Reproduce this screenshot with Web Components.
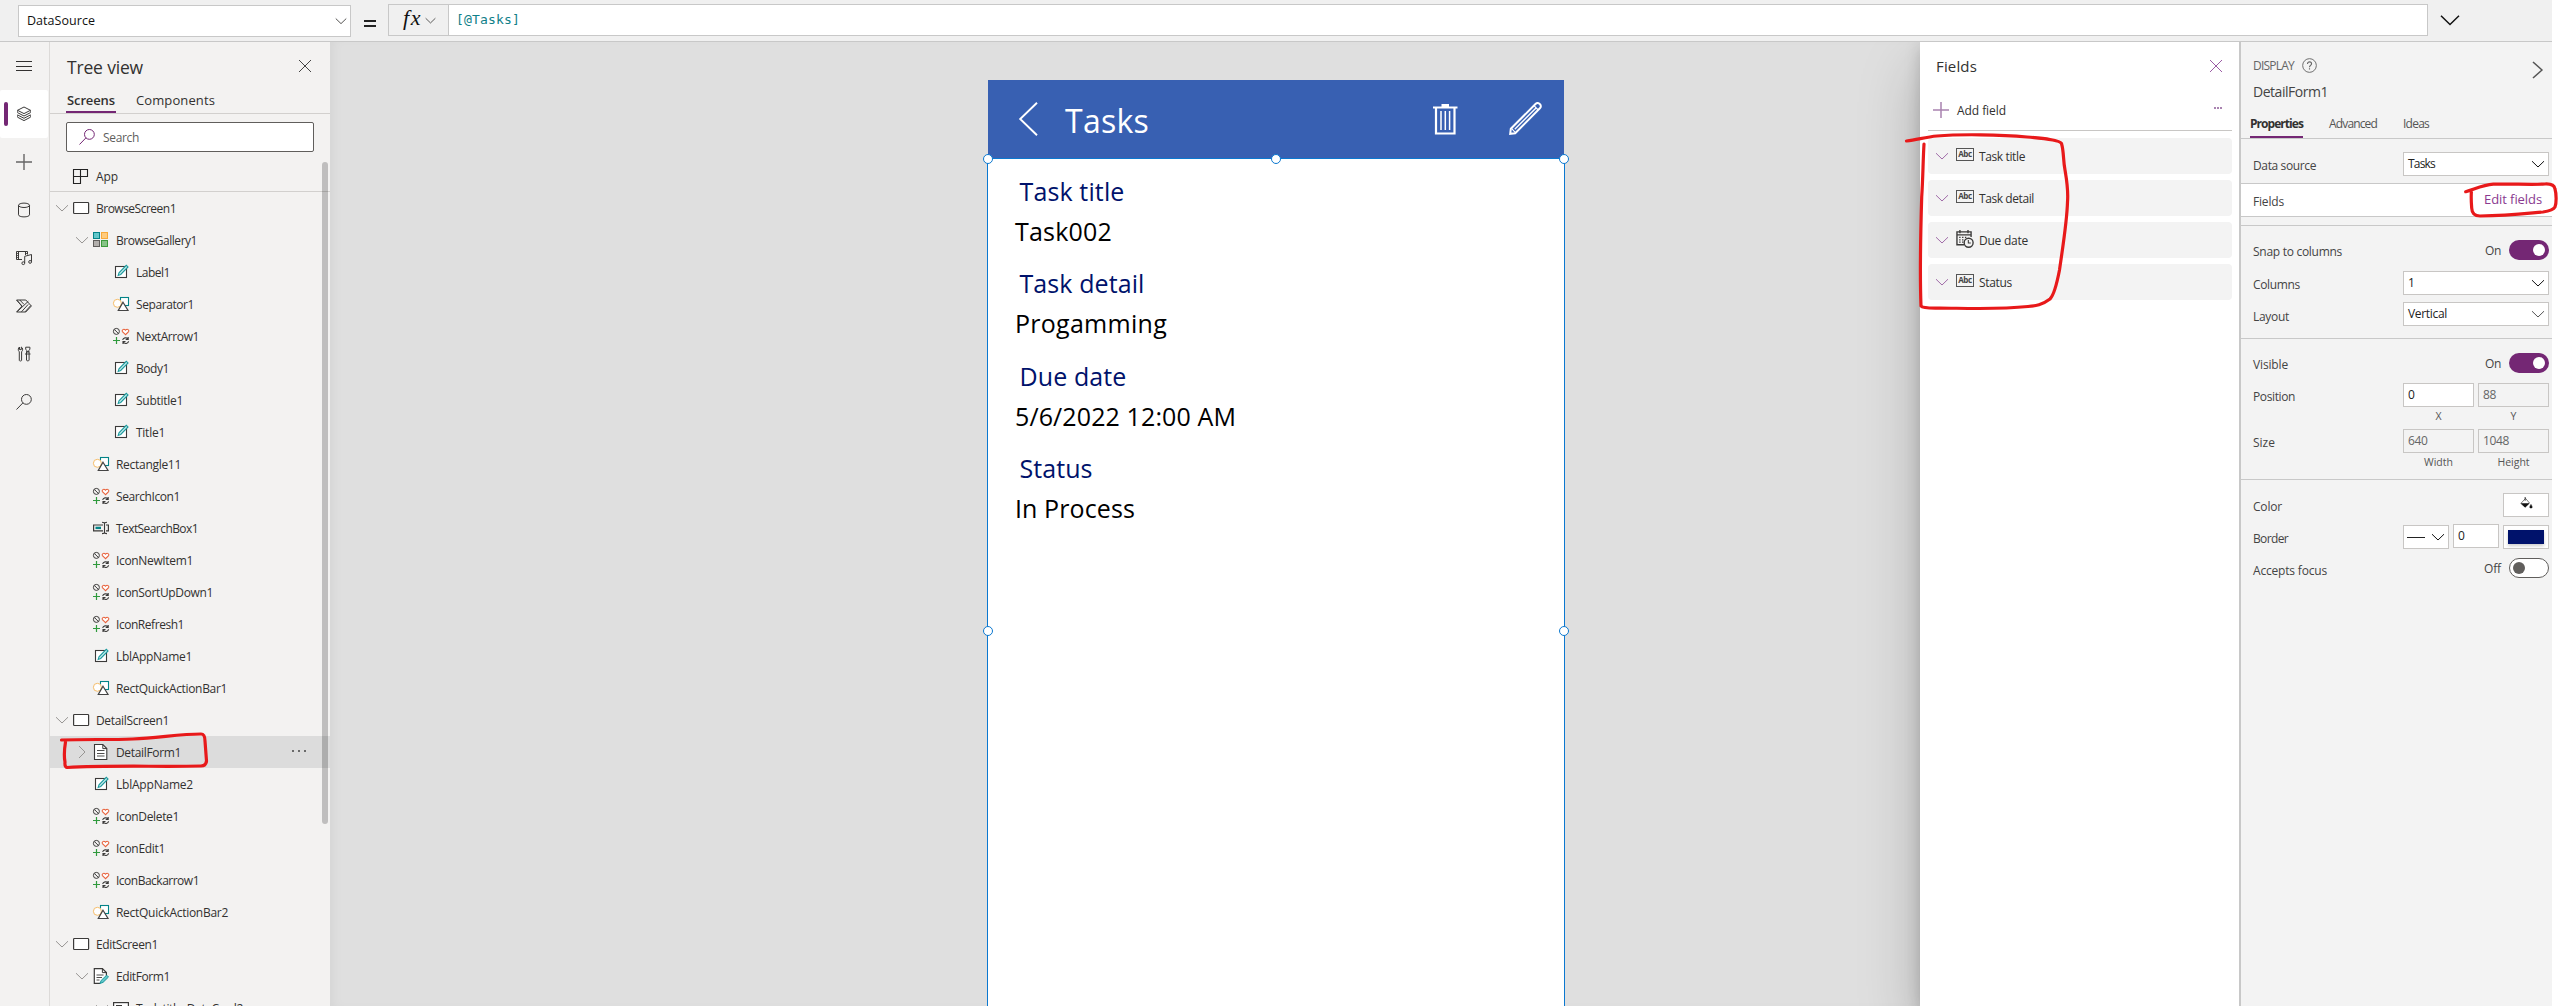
<!DOCTYPE html>
<html lang="en">
<head>
<meta charset="utf-8">
<title>Power Apps Studio</title>
<style>
html,body{margin:0;height:100%;overflow:hidden;background:#fff}
body{font:12px/16px "Open Sans","Noto Sans",sans-serif;color:#323130}
</style>
</head>
<body>
<pa-studio></pa-studio>
<script>
const ICONS = {
  menu:'<path d="M0 3.5h16M0 8.5h16M0 12.5h16" stroke="#323130"/>',
  layers:'<path d="M8 1l6.5 3.3L8 7.6 1.500 4.300z"/><path d="M1.500 6.600L8 10l6.500-3.400M1.500 8.900L8 12.300l6.500-3.400M1.500 11.200L8 14.600l6.500-3.400"/><path d="M1.500 4.300v2.300M14.500 4.300v2.300M1.500 8.900v2.300M14.500 8.900v2.300" stroke-width=".7"/>',
  plus:'<path d="M8 0v16M0 8h16" stroke="#666" stroke-width="1.4"/>',
  pplus:'<path d="M8 0v16M0 8h16" stroke="#a983b0" stroke-width="1.500"/>',
  data:'<ellipse cx="8" cy="3.300" rx="5.500" ry="2.200"/><path d="M2.500 3.300v9.500c0 1.200 2.500 2.100 5.500 2.100s5.500-.9 5.500-2.100V3.300"/>',
  media:'<path d="M6 9.500H.5v-8h11v3M2.500 2v7.500M9.500 2v3"/><path d="M.6 3.500h2M.6 5.500h2M.6 7.500h2M9.400 3.500h2" stroke-width=".8"/><path d="M8.700 13V6.300l6.800-1.800v7.200"/><circle cx="7.300" cy="13.200" r="1.400"/><circle cx="14.100" cy="11.900" r="1.400"/>',
  flow:'<path d="M.6 2h9.200l5.600 6-5.600 6H.6l5.500-6zM3.800 2l4.100 4.300M.9 13.900L12.300 3.300M5.400 13.900l6.800-7.500M9 13.900l5.800-6.400M.8 2.200l5 6"/>',
  tools:'<path d="M3.300 5.800C1.600 4.300 2.200 1.800 3.500 1v2.600h1.800V1c1.500.8 2 3.200.3 4.800v8.600c0 .8-2.300.8-2.300 0z"/><path d="M10.500 5.800h2.600v8.400c0 .9-2.600.9-2.600 0zM9.700 1.200h4.200v2l-1 1.200v1.400h-2.200V4.400l-1-1.200zM9 8h5.500"/>',
  search:'<circle cx="10.400" cy="5.400" r="4.900"/><path d="M6.900 8.900L.5 15.500"/>',
  close:'<path d="M2 2l12 12M14 2L2 14"/>',
  down:'<path d="M2 5.200l6 5.800 6-5.800"/>',
  right:'<path d="M5 2l6 6-6 6"/>',
  app:'<path d="M1.500 1.500h14v7h-7v7h-7zM1.500 8.500h7M8.500 1.500v7" stroke-width="1.100"/>',
  screen:'<rect x=".6" y="2.500" width="15" height="11" rx=".8" fill="#fff" stroke-width="1.200"/>',
  gallery:'<g stroke-width="1"><rect x=".5" y=".5" width="6" height="6" fill="#62c6c9" stroke="#038387"/><rect x="8.500" y=".5" width="6" height="6" fill="#ffcb7d" stroke="#f7a93b"/><rect x=".5" y="8.500" width="6" height="6" fill="#b3b0ad" stroke="#605e5c"/><rect x="8.500" y="8.500" width="6" height="6" fill="#87c387" stroke="#3c9a3c"/></g>',
  label:'<rect x="2.500" y="2.500" width="11" height="11" fill="#fff" stroke-width="1.100"/><path d="M5.200 11.400l.8-2.600L13.300 1.300l1.700 1.600-7.300 7.600z" fill="#c9ecec" stroke="#1b9a9e" stroke-width="1.100"/>',
  shape:'<rect x="7.500" y="1.500" width="8" height="8" fill="#fff" stroke="#038387" stroke-width="1.100"/><circle cx="4.400" cy="7.300" r="4" fill="#fff" stroke="#f5bd6a"/><path d="M10 6.200l5 8.300H5.300z" fill="#fff" stroke="#444" stroke-width="1.200"/>',
  icons:'<circle cx="3.400" cy="3.400" r="3"/><path d="M1.400 1.500l4 4"/><path d="M12.500 6.700L9.400 3.600C8.600 2.300 10.500.1 12.500 2.200 14.500.1 16.400 2.300 15.600 3.600z" stroke="#e8623c" stroke-width="1.100" fill="#fff"/><path d="M3.500 9v7M0 12.500h7" stroke="#2f9a3d" stroke-width="1.200"/><path d="M9.700 12c.3-2.400 4-3 5.300-1M15.200 8.900v2.500h-2.500M15.600 13.300c-.3 2.400-4 3-5.300 1M10 16v-2.400h2.500" stroke-width="1.100"/>',
  textbox:'<path d="M10 5H.6v5.800H10M13 5h2.400v5.800H13" stroke-width="1.200"/><path d="M2.500 7.900h5.500" stroke="#038387" stroke-width="2.400"/><path d="M11.500 2.500v11M9 2.300c1.500 0 2.500.3 2.500 1 0-.7 1-1 2.500-1M9 13.600c1.500 0 2.500-.3 2.500-1 0 .7 1 1 2.500 1" stroke-width="1.100"/>',
  form:'<path d="M1.500.5h8.300l4 4v11H1.500z" fill="#fff" stroke-width="1.100"/><path d="M9.800.6v4h4"/><path d="M4 6.500h7.500M4 9.500h7.500M4 12h7.500" stroke-width=".9"/>',
  edit:'<path d="M13.400 8V4.600l-4-4H1.300v14.800h6" fill="#fff" stroke-width="1.200"/><path d="M9.400.6v4h4"/><path d="M3.500 7h7M3.500 9.500h5.500M3.500 12h3" stroke-width=".9"/><path d="M7 15.400l1.200-3 5.500-5.200 1.800 1.800-5.500 5.400z" fill="#62c6c9" stroke="#1b9a9e"/>',
  card:'<rect x=".6" y="2.600" width="14.800" height="11" fill="#fff" stroke-width="1.200"/><path d="M3 5.500h6M3 8.500h10"/>',
  help:'<circle cx="8" cy="8" r="7.300"/><path d="M5.900 6.300c0-3 4.300-2.800 4.300-.1 0 1.700-2.200 1.600-2.200 3.600M8 11v1.300" stroke-width="1.200"/>',
  date:'<path d="M7.500 13.900H.9V1.800h13.300v4.800M.8 4.600h13.400M3.700 0v3M11.300 0v3" stroke-width="1.300"/><path d="M3 7h1.300M5.700 7H7M8.400 7h1.300M3 9.200h1.300M5.700 9.200H7M3 11.400h1.300M5.700 11.400H7" stroke-width="1.200"/><circle cx="11.900" cy="12" r="4.200" fill="#f3f3f3" stroke-width="1.300"/><path d="M11.600 9.500v2.800h2.300"/>',
  trash:'<g stroke="#fff"><path d="M0 4.500h24.500" stroke-width="2"/><path d="M8.500 2.500h7.500" stroke-width="3"/><path d="M3 5v25.500h18.500V5" stroke-width="2.200"/><path d="M8 8v19M12.300 8v19M16.600 8v19" stroke-width="1.500"/></g>',
  pencil:'<g stroke="#fff" stroke-width="2"><path d="M1.200 31.800l.6-5L26.500 2c1.600-1.600 3.300-1 4.300.1 1.200 1.100 1.500 2.800.1 4.200L6.200 31.200z"/><path d="M5.800 27.200L27 6" stroke-width="1.400"/><path d="M2.300 26.200l4.300 4.600M25 3.600l4.200 4.400" stroke-width="1.100"/></g>',
  back:'<path d="M18 .8L1.200 17 18 33.200" stroke="#fff" stroke-width="1.900"/>',
  bucket:'<path d="M1 7L6.500 1.500 11 6.500 6 11z" fill="#fff" stroke="#444" stroke-width=".8"/><path d="M.8 6.800h10.400L6 11.500z" fill="#111" stroke="none"/><path d="M6 0v4" stroke="#222"/><path d="M12.800 8c2 2.800 1.800 4 0 4s-2-1.200 0-4z" fill="#111" stroke="#111" stroke-width=".6"/>'
};
const def = (name, render) => customElements.define(name, class extends HTMLElement {
  connectedCallback() {
    if (this.shadowRoot) return;
    this.attachShadow({mode:'open'}).innerHTML = render(this);
  }
});

/* Single line label; "w" tracks the glyphs so that the line has that width. */
customElements.define('ui-text', class extends HTMLElement {
  connectedCallback() {
    if (this.shadowRoot) return;
    const a = n => this.getAttribute(n);
    this.attachShadow({mode:'open'}).innerHTML =
      `<style>:host{display:block;white-space:nowrap;flex:none}span{display:inline-block}</style><span><slot></slot></span>`;
    if (a('size')) this.style.fontSize = a('size') + 'px';
    if (a('color')) this.style.color = a('color');
    if (a('weight')) this.style.fontWeight = a('weight');
    const w = +a('w');
    if (w) {
      const real = this.shadowRoot.querySelector('span').getBoundingClientRect().width;
      this.style.letterSpacing = ((w - real) / this.textContent.length).toFixed(3) + 'px';
    }
  }
});

def('ui-icon', el => {
  const w = el.getAttribute('width') || 16, h = el.getAttribute('height') || w;
  const vb = el.getAttribute('box') || '0 0 16 16';
  return `<style>:host{display:block;flex:none;width:${w}px;height:${h}px}svg{display:block;overflow:visible}</style>
  <svg width="${w}" height="${h}" viewBox="${vb}" preserveAspectRatio="none" fill="none" stroke="${el.getAttribute('color') || '#3b3a39'}">${ICONS[el.getAttribute('name')]}</svg>`;
});

def('formula-bar', () => `<style>
:host{display:flex;flex:none;height:41px;width:2552px;background:#f0f0f0;border-bottom:1px solid #c8c8c8;box-sizing:content-box}
.prop{margin:5px 0 0 18px;width:333px;height:32px;box-sizing:border-box;border:1px solid #c8c8c8;background:#fff;display:flex;align-items:center;justify-content:space-between;padding:0 2px 0 8px;color:#111}
.eq{width:37px;display:flex;flex-direction:column;gap:3px;align-items:center;padding-top:20px}
.eq i{width:12px;height:2px;background:#222}
.fx{margin-top:4px;width:60px;height:32px;box-sizing:border-box;border:1px solid #c8c8c8;border-right:0;display:flex;align-items:center;padding-left:14px;gap:2px}
.fx ui-text{font-family:"Liberation Serif",serif;font-style:italic;color:#111;margin-top:-4px}
.in{margin-top:4px;width:1980px;height:32px;box-sizing:border-box;border:1px solid #c8c8c8;background:#fff;display:flex;align-items:center;padding-left:7px;font-family:"DejaVu Sans Mono",monospace;color:#0f8089}
.exp{margin:11px 0 0 13px}
</style>
<div class="prop"><ui-text size="12.5" w="68">DataSource</ui-text><ui-icon name="down" width="14"></ui-icon></div>
<div class="eq"><i></i><i></i></div>
<div class="fx"><ui-text size="22" w="19">fx</ui-text><ui-icon name="down" width="13"></ui-icon></div>
<div class="in"><ui-text size="13" w="64">[@Tasks]</ui-text></div>
<ui-icon class="exp" name="down" box="2 2 12 12" width="18" color="#111"></ui-icon>`);

def('rail-item', el => `<style>
:host{display:flex;align-items:center;height:48px;width:48px;flex:none}
:host([active]){background:#fff;border-radius:2px}
i{width:4px;height:24px;border-radius:2px;margin-left:4px}
:host([active]) i{background:#742774}
ui-icon{margin-left:8px}
</style><i></i><ui-icon name="${el.getAttribute('icon')}"></ui-icon>`);

def('side-rail', () => `<style>:host{display:flex;flex-direction:column;width:49px;flex:none;border-right:1px solid #dcdad8;background:#f3f2f1}</style>
<rail-item icon="menu"></rail-item><rail-item icon="layers" active></rail-item><rail-item icon="plus"></rail-item><rail-item icon="data"></rail-item><rail-item icon="media"></rail-item><rail-item icon="flow"></rail-item><rail-item icon="tools"></rail-item><rail-item icon="search"></rail-item>`);

def('tree-row', el => {
  const lv = +el.getAttribute('level'), c = el.getAttribute('chev');
  return `<style>
:host{display:flex;align-items:center;height:32px;flex:none;box-sizing:border-box;padding-left:${4 + lv * 20}px}
:host([selected]){background:#dcdcdc}
.c{width:16px;height:16px;margin-right:3px;flex:none}
.t{margin-left:7px;padding-top:2px}
.more{display:flex;gap:4px;margin-left:auto;padding-right:24px;margin-top:-2px}
.more i{width:2px;height:2px;background:#444;border-radius:1px}
</style><div class="c">${c ? `<ui-icon name="${c}" width="16" color="#979593"></ui-icon>` : ''}</div>
<ui-icon name="${el.getAttribute('icon')}"></ui-icon>
<ui-text class="t" w="${el.getAttribute('w')}">${el.getAttribute('name')}</ui-text>
${el.hasAttribute('selected') ? '<div class="more"><i></i><i></i><i></i></div>' : ''}`;
});

const TREE = [
 [0,'screen','BrowseScreen1',80,'down'],[1,'gallery','BrowseGallery1',81,'down'],[2,'label','Label1',34],[2,'shape','Separator1',58],
 [2,'icons','NextArrow1',63],[2,'label','Body1',33],[2,'label','Subtitle1',47],[2,'label','Title1',29],[1,'shape','Rectangle11',65],
 [1,'icons','SearchIcon1',64],[1,'textbox','TextSearchBox1',82],[1,'icons','IconNewItem1',77],[1,'icons','IconSortUpDown1',97],
 [1,'icons','IconRefresh1',68],[1,'label','LblAppName1',76],[1,'shape','RectQuickActionBar1',111],[0,'screen','DetailScreen1',73,'down'],
 [1,'form','DetailForm1',65,'right'],[1,'label','LblAppName2',77],[1,'icons','IconDelete1',63],[1,'icons','IconEdit1',49],
 [1,'icons','IconBackarrow1',83],[1,'shape','RectQuickActionBar2',112],[0,'screen','EditScreen1',62,'down'],[1,'edit','EditForm1',54,'down'],
 [2,'card','Task title_DataCard2',107,'down']];

def('tree-view', () => `<style>
:host{display:flex;flex-direction:column;width:280px;flex:none;background:#f3f2f1;position:relative;overflow:hidden}
.head,.tabs,.find,.app{flex:none}
.head{display:flex;height:48px;align-items:center;justify-content:space-between;padding:0 17px 0 17px;box-sizing:border-box}
.head ui-text{padding-top:2px}
.tabs{display:flex;gap:19px;height:23px;padding-left:16px;border-bottom:1px solid #d2d0ce;line-height:20px}
.tabs div{padding:0 1px;height:21px;border-bottom:2px solid transparent}
.tabs .on{border-color:#742774}
.find{display:flex;align-items:center;margin:8px 16px 0;height:30px;box-sizing:border-box;border:1px solid #605e5c;border-radius:2px;background:#fff;padding-left:12px;gap:8px;color:#605e5c}
.find ui-text{padding-top:2px}
.app{display:flex;align-items:center;height:40px;box-sizing:border-box;padding:8px 0 0 22px;gap:8px;border-bottom:1px solid #d2d0ce}
.app ui-text{padding-top:3px}
.bar{position:absolute;right:2px;top:120px;width:6px;height:662px;border-radius:3px;background:rgba(0,0,0,.21)}
</style>
<div class="head"><ui-text size="17.5" weight="500" w="76">Tree view</ui-text><ui-icon name="close" width="16" color="#444"></ui-icon></div>
<div class="tabs"><div class="on"><ui-text size="13" weight="600" w="48">Screens</ui-text></div><div><ui-text size="13" w="79">Components</ui-text></div></div>
<div class="find"><ui-icon name="search" color="#742774"></ui-icon><ui-text w="36">Search</ui-text></div>
<div class="app"><ui-icon name="app" color="#222"></ui-icon><ui-text w="22">App</ui-text></div>
${TREE.map((r, i) => `<tree-row level="${r[0]}" icon="${r[1]}" name="${r[2]}" w="${r[3]}" ${r[4] ? `chev="${r[4]}"` : ''} ${i === 17 ? 'selected' : ''}></tree-row>`).join('')}
<div class="bar"></div>`);

def('data-card', el => `<style>
:host{display:block;height:92.6px;font-size:25px;line-height:40px}
.l{color:#00126b;padding-left:31.500px}.v{color:#000;padding-left:27px}
</style><ui-text class="l" w="${el.getAttribute('lw')}">${el.getAttribute('label')}</ui-text><ui-text class="v" w="${el.getAttribute('vw')}">${el.getAttribute('value')}</ui-text>`);

def('app-canvas', () => `<style>
:host{display:flex;width:1590px;flex:none;background:#dfdfdf;box-shadow:inset 8px 0 14px -8px rgba(0,0,0,.07);padding:38px 0 0 658px;box-sizing:border-box}
.phone{width:576px;display:flex;flex-direction:column;background:#fff}
.hd{height:78px;flex:none;background:#3860b2;display:flex;color:#fff;line-height:81px}
.hd ui-text{margin-left:27px}
.form{flex:1;border:solid #0b78d0;border-width:1px 1px 0;margin:0 -1px;position:relative;padding-top:11.5px}
.h{position:absolute;width:8px;height:8px;border:1px solid #0b78d0;background:#fff;border-radius:50%;transform:translate(-50%,-50%)}
</style>
<div class="phone">
<div class="hd"><ui-icon name="back" box="0 0 19 34" width="19" height="34" style="margin:22px 0 0 31px"></ui-icon><ui-text size="32" w="84" >Tasks</ui-text>
<ui-icon name="trash" box="0 0 24.5 32" width="24.5" height="32" style="margin:23px 0 0 284px"></ui-icon>
<ui-icon name="pencil" box="0 0 33 33" width="33" height="33" style="margin:22px 0 0 51px"></ui-icon></div>
<div class="form">
<data-card label="Task title" lw="105" value="Task002" vw="97"></data-card>
<data-card label="Task detail" lw="125" value="Progamming" vw="152"></data-card>
<data-card label="Due date" lw="107" value="5/6/2022 12:00 AM" vw="221"></data-card>
<data-card label="Status" lw="73" value="In Process" vw="120"></data-card>
<i class="h" style="left:0;top:0"></i><i class="h" style="left:50%;top:0"></i><i class="h" style="left:100%;top:0"></i><i class="h" style="left:0;top:472px"></i><i class="h" style="left:100%;top:472px"></i>
</div></div>`);

def('field-row', el => `<style>
:host{display:flex;align-items:center;height:36px;background:#f3f3f3;border-radius:4px;padding-left:6px}
.ic{width:18px;margin:-3px 5px 0 6px;flex:none}
.abc{height:11px;border:1px solid #555;font:700 8px/10px "Open Sans",sans-serif;color:#444;display:flex;justify-content:center;width:16px}
.t{padding-top:1px}
</style><ui-icon name="down" width="16" color="#a06ba8"></ui-icon>
<div class="ic">${el.hasAttribute('date') ? '<ui-icon name="date" width="17" height="17"></ui-icon>' : '<div class="abc"><ui-text w="13.5">Abc</ui-text></div>'}</div>
<ui-text class="t" w="${el.getAttribute('w')}">${el.getAttribute('name')}</ui-text>`);

def('fields-panel', () => `<style>
:host{display:block;width:319px;flex:none;background:#fff;box-sizing:border-box;padding:0 7px 0 8px;box-shadow:0 26px 58px rgba(0,0,0,.22),0 5px 15px rgba(0,0,0,.18);clip-path:inset(0 0 0 -120px)}
.h{display:flex;height:48px;align-items:center;justify-content:space-between;padding:0 8px 0 8px}
.a{display:flex;height:40px;align-items:center;padding:0 10px 0 5px;border-bottom:1px solid #c8c6c4;gap:8px}
.a ui-text{padding-top:1px}
.d{display:flex;gap:1px;margin:-4px 0 0 auto}.d i{width:2px;height:2px;background:#a983b0}
.l{display:flex;flex-direction:column;gap:6px;padding-top:7px}
</style>
<div class="h"><ui-text size="15" w="41">Fields</ui-text><ui-icon name="close" color="#9b5ba5"></ui-icon></div>
<div class="a"><ui-icon name="pplus"></ui-icon><ui-text w="49">Add field</ui-text><div class="d"><i></i><i></i><i></i></div></div>
<div class="l"><field-row name="Task title" w="46"></field-row><field-row name="Task detail" w="55"></field-row><field-row name="Due date" w="49" date></field-row><field-row name="Status" w="33"></field-row></div>`);

def('prop-row', el => `<style>
:host{display:flex;align-items:center;height:32px;padding:0 3px 0 12px;color:#444}
.l{padding-top:3px;margin-right:auto}
:host(.pair) .l{padding-top:10px}
</style><ui-text class="l" w="${el.getAttribute('w')}">${el.getAttribute('label')}</ui-text><slot></slot>`);

def('ui-box', el => `<style>
:host{display:flex;align-items:center;justify-content:space-between;box-sizing:border-box;height:24px;width:${el.getAttribute('width') || 146}px;border:1px solid #c8c6c4;background:#fff;padding:0 2px 0 4px;flex:none;color:#222}
:host([off]){background:#f3f3f3;color:#666}
</style><slot></slot>${el.hasAttribute('menu') ? `<ui-icon name="down" color="${el.getAttribute('menu') || '#111'}"></ui-icon>` : ''}`);

def('ui-toggle', el => `<style>
:host{display:flex;align-items:center;gap:8px;color:#444}
.k{width:40px;height:20px;border-radius:10px;box-sizing:border-box;background:#742774;display:flex;align-items:center;justify-content:flex-end;padding:0 4px}
.k i{width:12px;height:12px;border-radius:50%;background:#fff}
ui-text{padding-top:1px}
:host([off]) .k{background:#fff;border:1px solid #605e5c;justify-content:flex-start;padding:0 3px}
:host([off]) i{background:#605e5c}
</style><ui-text w="${el.hasAttribute('off') ? 17 : 16}">${el.hasAttribute('off') ? 'Off' : 'On'}</ui-text><div class="k"><i></i></div>`);

def('num-pair', el => {
  const [a, b, c, d] = el.getAttribute('v').split(',');
  return `<style>:host{display:flex;gap:4px;padding-top:4px;height:42px}div{width:71px;text-align:center;font-size:10.500px;color:#555}div>ui-text{line-height:19px}ui-box{font-size:12px}</style>
<div><ui-box width="71" ${a === '0' ? '' : 'off'}><ui-text w="${a.length * 6.500}">${a}</ui-text></ui-box><ui-text>${c}</ui-text></div>
<div><ui-box width="71" off><ui-text w="${b.length * 6.500}">${b}</ui-text></ui-box><ui-text>${d}</ui-text></div>`;
});

def('property-panel', () => `<style>
:host{display:block;width:311px;flex:none;background:#f3f3f3;border-left:2px solid #c8c8c8}
.top{display:flex;justify-content:space-between;height:60px;padding:0 8px 0 12px}
.d{display:flex;align-items:center;height:18px;padding-top:14px;gap:8px;color:#666}
.d ui-text{padding-top:2px}
.n{padding-top:7px;line-height:22px;color:#444}
.tabs{display:flex;height:36px;gap:26px;padding-left:9px;border-bottom:1px solid #c8c8c8;line-height:44px;color:#555}
.tabs div{height:34px;border-bottom:2px solid transparent}
.tabs .on{border-color:#742774;color:#323130}
hr{margin:0;border:0;height:1px;background:#c8c8c8}
.f{background:#fff;padding-right:10px;height:32px}
.pair{height:46px;align-items:flex-start}
.b{display:flex;gap:4px}
.ln{width:18px;height:1px;background:#222}
.sw{width:36px;height:14px;background:#00126b;box-shadow:0 2px 3px rgba(0,0,0,.2)}
</style>
<div class="top"><div><div class="d"><ui-text w="41">DISPLAY</ui-text><ui-icon name="help" color="#666" width="15"></ui-icon></div><ui-text class="n" size="14" w="75">DetailForm1</ui-text></div><ui-icon name="right" box="5 2 6 12" width="9" height="16" color="#555" style="margin:20px 2px 0 0"></ui-icon></div>
<div class="tabs"><div class="on"><ui-text weight="700" w="53">Properties</ui-text></div><div><ui-text w="48">Advanced</ui-text></div><div><ui-text w="26">Ideas</ui-text></div></div>
<prop-row label="Data source" w="63" style="height:38px;margin-top:6px"><ui-box menu><ui-text w="27">Tasks</ui-text></ui-box></prop-row><hr>
<prop-row label="Fields" w="31" class="f"><ui-text size="13" w="58" color="#8a3a8f" style="margin-top:-2px">Edit fields</ui-text></prop-row><hr>
<div style="height:8px"></div><hr>
<prop-row label="Snap to columns" w="89" style="margin:8px 0 1px"><ui-toggle></ui-toggle></prop-row>
<prop-row label="Columns" w="47"><ui-box menu><ui-text>1</ui-text></ui-box></prop-row>
<prop-row label="Layout" w="36" style="margin-bottom:7px"><ui-box menu="#555" style="margin-bottom:2px"><ui-text w="39">Vertical</ui-text></ui-box></prop-row><hr>
<prop-row label="Visible" w="35" style="margin-top:8px"><ui-toggle></ui-toggle></prop-row>
<prop-row label="Position" w="42" class="pair"><num-pair v="0,88,X,Y"></num-pair></prop-row>
<prop-row label="Size" w="22" class="pair" style="margin-bottom:8px"><num-pair v="640,1048,Width,Height"></num-pair></prop-row><hr>
<prop-row label="Color" w="29" style="margin-top:9px"><ui-box width="46" style="justify-content:center;padding:0 0 4px"><ui-icon name="bucket" width="12" box="0 0 14 13"></ui-icon></ui-box></prop-row>
<prop-row label="Border" w="35"><div class="b"><ui-box width="46" menu style="padding-left:3px"><i class="ln"></i></ui-box><ui-box width="46" style="margin-top:-1px"><ui-text>0</ui-text></ui-box><ui-box width="46" style="padding:0 4px"><div class="sw"></div></ui-box></div></prop-row>
<prop-row label="Accepts focus" w="74"><ui-toggle off style="margin-bottom:2px"></ui-toggle></prop-row>`);

/* Hand drawn marks that float above the whole workspace. */
def('ink-layer', () => `<style>:host{position:absolute;inset:0;pointer-events:none}svg{display:block}</style>
<svg width="2558" height="1006" fill="none" stroke="#e8191a" stroke-width="3.200" stroke-linecap="round" stroke-linejoin="round">
<path d="M61.500 740C85 739 110 740 133 739C158 738 180 734 201 734Q205 734 205 741L206.500 761Q206 766 201 766C160 767 110 765 67 767.500Q64.500 767 65 762C63.500 754 64.500 748 65.500 742"/>
<path d="M1906.500 141C1918 139.500 1926 137 1937 136C1960 134 2000 134.500 2027 137C2044 138.500 2060 140 2061.500 143.500C2064 152 2063 160 2065 170C2067 182 2068.500 190 2067.500 202C2067 222 2062 252 2059.500 270C2057 283 2053 296 2050 299C2042 305 2036 306 2028 306.500C1995 310 1960 308 1940 308Q1923 308.500 1921 306C1920 280 1921 220 1921.700 197C1923 178 1923 160 1924 144"/>
<path d="M2465.700 191.700C2475 189 2483 185 2493.300 184.200C2510 183.500 2530 185 2545 184Q2554 183.500 2555 189C2556.500 194 2556.500 203 2555 207Q2553 210.500 2543 212C2530 213 2510 215.500 2480 216Q2472 216 2471.700 208C2471 200 2471 196 2471.500 190"/>
</svg>`);

def('pa-studio', () => `<style>
:host{display:flex;flex-direction:column;width:2558px;height:1006px;position:relative;overflow:hidden}
.w{display:flex;flex:1;min-height:0;overflow:hidden}
</style><formula-bar></formula-bar><div class="w"><side-rail></side-rail><tree-view></tree-view><app-canvas></app-canvas><fields-panel></fields-panel><property-panel></property-panel></div><ink-layer></ink-layer>`);
</script>
</body>
</html>
